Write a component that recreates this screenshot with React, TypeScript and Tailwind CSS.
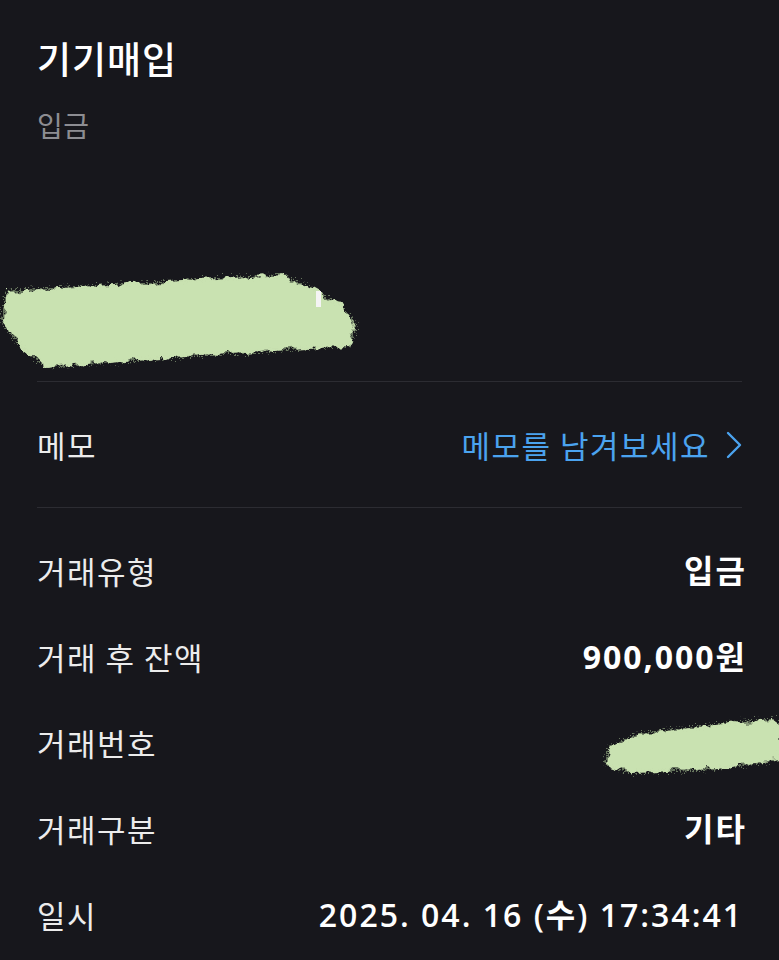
import React from 'react';

const font = { fontFamily: '"Noto Sans CJK KR", "Noto Sans", sans-serif' };
const valueFont = { fontFamily: '"Open Sans", "Noto Sans CJK KR", sans-serif' };

function Scribble({ w, h, points, mark }: { w: number; h: number; points: string; mark?: boolean }) {
    const id = 'rough' + w + h;
    return (
        <svg width={w} height={h} viewBox={`0 0 ${w} ${h}`} className="block">
            <defs>
                <filter id={id} x="-10%" y="-30%" width="120%" height="160%">
                    <feTurbulence type="fractalNoise" baseFrequency="0.09" numOctaves="3" seed="4" result="n" />
                    <feDisplacementMap in="SourceGraphic" in2="n" scale="12" xChannelSelector="R" yChannelSelector="G" />
                </filter>
                <filter id={id + 'f'} x="-10%" y="-30%" width="120%" height="160%">
                    <feTurbulence type="fractalNoise" baseFrequency="0.6" numOctaves="2" seed="9" result="n" />
                    <feDisplacementMap in="SourceGraphic" in2="n" scale="16" xChannelSelector="R" yChannelSelector="G" />
                </filter>
            </defs>
            <polygon points={points} fill="#a9c495" filter={`url(#${id}f)`} opacity="0.55" />
            <polygon points={points} fill="#cde6b4" filter={`url(#${id})`} opacity="0.97" />
            {mark && <rect x="316" y="26" width="5" height="16" fill="#f4f4f4" />}
        </svg>
    );
}

const rows = [
    { label: '거래유형', value: '입금', bold: true },
    { label: '거래 후 잔액', value: '900,000원', bold: true },
    { label: '거래번호', value: null, bold: false },
    { label: '거래구분', value: '기타', bold: true },
    { label: '일시', value: '2025. 04. 16 (수) 17:34:41', bold: false },
];

export default function App() {
    return (
        <div className="w-[779px] h-[960px] overflow-hidden bg-[#17171c] text-[#f2f2f2]" style={font}>
            <div className="px-[37px]">
                <h1 className="pt-[37px] text-[37px] leading-[42px] tracking-[1px] font-medium text-white">기기매입</h1>
                <p className="mt-[30px] text-[28px] leading-[32px] tracking-[0.5px] text-[#8d8d92]">입금</p>

                <div className="-ml-[37px] mt-[124px] mb-[6px]">
                    <Scribble
                        w={370}
                        h={110}
                        mark
                        points="6,26 150,18 284,10 304,20 340,40 356,60 350,80 200,90 46,102 16,76 2,56"
                    />
                </div>

                <div className="border-t border-[#2c2c32]" />
                <div className="h-[125px] flex items-center justify-between">
                    <span className="text-[31px] leading-[40px] tracking-[1.5px] text-[#ececec]">메모</span>
                    <span className="flex items-center gap-[16px] text-[31px] leading-[40px] tracking-[1.5px] text-[#4ba3ef]">
                        메모를 남겨보세요
                        <svg width="16" height="28" viewBox="0 0 16 28" fill="none">
                            <path d="M2 2 L14 14 L2 26" stroke="#4ba3ef" strokeWidth="2.4" strokeLinecap="round" strokeLinejoin="round" />
                        </svg>
                    </span>
                </div>
                <div className="border-t border-[#2c2c32]" />

                <div className="pt-[20px]">
                    {rows.map(row => (
                        <div key={row.label} className="h-[86px] flex items-center justify-between">
                            <span className="text-[31px] leading-[40px] tracking-[1.5px] text-[#ececec]">{row.label}</span>
                            {row.value ? (
                                <span
                                    className={
                                        row.bold
                                            ? '-mr-[5px] text-[32px] leading-[40px] tracking-[2px] font-bold text-white'
                                            : '-mr-[1px] text-[32px] leading-[40px] tracking-[2px] font-semibold text-white'
                                    }
                                    style={valueFont}
                                >
                                    {row.value}
                                </span>
                            ) : (
                                <div className="-mr-[37px]">
                                    <Scribble
                                        w={176}
                                        h={70}
                                        points="6,40 36,26 96,19 136,14 170,12 178,18 178,52 96,62 26,64 2,56"
                                    />
                                </div>
                            )}
                        </div>
                    ))}
                </div>
            </div>
        </div>
    );
}
